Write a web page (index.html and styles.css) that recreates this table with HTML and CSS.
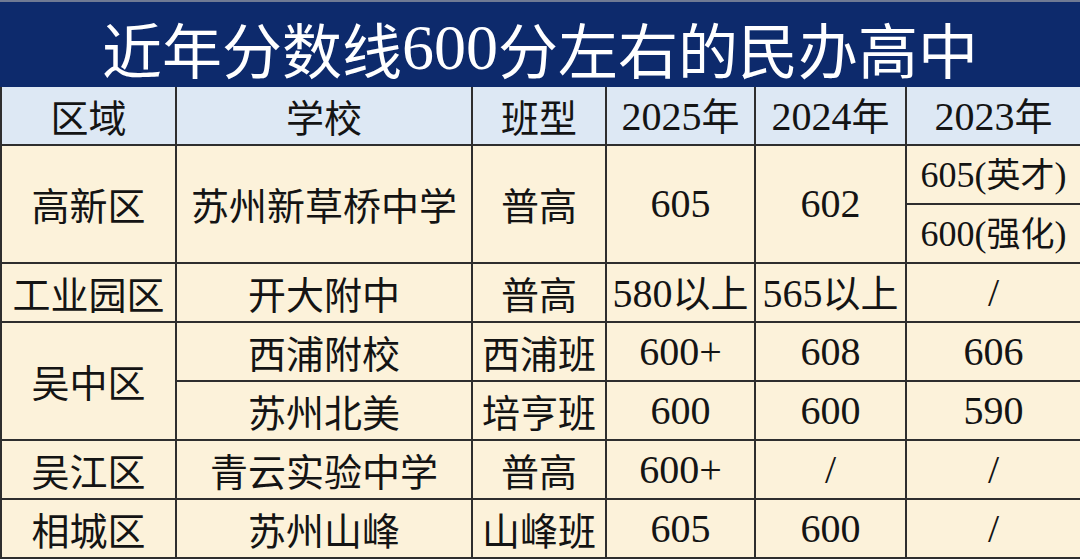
FILE: index.html
```html
<!DOCTYPE html>
<html lang="zh-CN">
<head>
<meta charset="utf-8">
<title>近年分数线600分左右的民办高中</title>
<link rel="stylesheet" href="styles.css">
</head>
<body>
<div class="sheet">
  <div class="title">近年分数线<span class="num">600</span>分左右的民办高中</div>
  <table class="grid">
    <colgroup>
      <col class="c-area"><col class="c-school"><col class="c-type"><col class="c-y1"><col class="c-y2"><col class="c-y3">
    </colgroup>
    <thead>
      <tr class="head">
        <th>区域</th><th>学校</th><th>班型</th><th><span class="num">2025</span>年</th><th><span class="num">2024</span>年</th><th><span class="num">2023</span>年</th>
      </tr>
    </thead>
    <tbody>
      <tr class="row">
        <td rowspan="2">高新区</td><td rowspan="2">苏州新草桥中学</td><td rowspan="2">普高</td><td rowspan="2" class="num">605</td><td rowspan="2" class="num">602</td><td class="small"><span class="num">605(</span>英才<span class="num">)</span></td>
      </tr>
      <tr class="row">
        <td class="small"><span class="num">600(</span>强化<span class="num">)</span></td>
      </tr>
      <tr class="row">
        <td>工业园区</td><td>开大附中</td><td>普高</td><td><span class="num">580</span>以上</td><td><span class="num">565</span>以上</td><td class="num">/</td>
      </tr>
      <tr class="row">
        <td rowspan="2">吴中区</td><td>西浦附校</td><td>西浦班</td><td class="num">600+</td><td class="num">608</td><td class="num">606</td>
      </tr>
      <tr class="row">
        <td>苏州北美</td><td>培亨班</td><td class="num">600</td><td class="num">600</td><td class="num">590</td>
      </tr>
      <tr class="row">
        <td>吴江区</td><td>青云实验中学</td><td>普高</td><td class="num">600+</td><td class="num">/</td><td class="num">/</td>
      </tr>
      <tr class="row">
        <td>相城区</td><td>苏州山峰</td><td>山峰班</td><td class="num">605</td><td class="num">600</td><td class="num">/</td>
      </tr>
    </tbody>
  </table>
</div>
</body>
</html>
```

FILE: styles.css
```css
html, body {
  margin: 0;
  padding: 0;
  background: #fcf2da;
}

.sheet {
  width: 1080px;
  height: 559px;
  overflow: hidden;
  font-family: "Noto Sans CJK SC", sans-serif;
  color: #141414;
}

.num {
  font-family: "Liberation Serif", "DejaVu Serif", serif;
}

.title {
  height: 87px;
  box-sizing: border-box;
  border-top: 2px solid #6f7a94;
  background: #0d2a6c;
  color: #ffffff;
  font-size: 60px;
  line-height: 1;
  display: flex;
  align-items: center;
  justify-content: center;
  padding-top: 6px;
}

.title .num {
  font-size: 64px;
}

.grid {
  width: 1080px;
  table-layout: fixed;
  border-collapse: collapse;
  border: 2px solid #2e2e2e;
  border-top: none;
}

.c-area { width: 175px; }
.c-school { width: 296px; }
.c-type { width: 134px; }
.c-y1 { width: 149px; }
.c-y2 { width: 151px; }
.c-y3 { width: 175px; }

.grid th,
.grid td {
  border: 2px solid #2e2e2e;
  padding: 0;
  text-align: center;
  vertical-align: middle;
  font-weight: 400;
  font-size: 38px;
  line-height: 1;
  white-space: nowrap;
  overflow: hidden;
}

.grid .num {
  font-size: 40px;
}

.head th {
  background: #dde8f4;
  height: 57px;
  border-top: none;
}

.row td {
  background: #fcf2da;
  height: 57px;
}

.grid td.small {
  font-size: 34px;
}

.grid td.small .num {
  font-size: 36px;
}
```
